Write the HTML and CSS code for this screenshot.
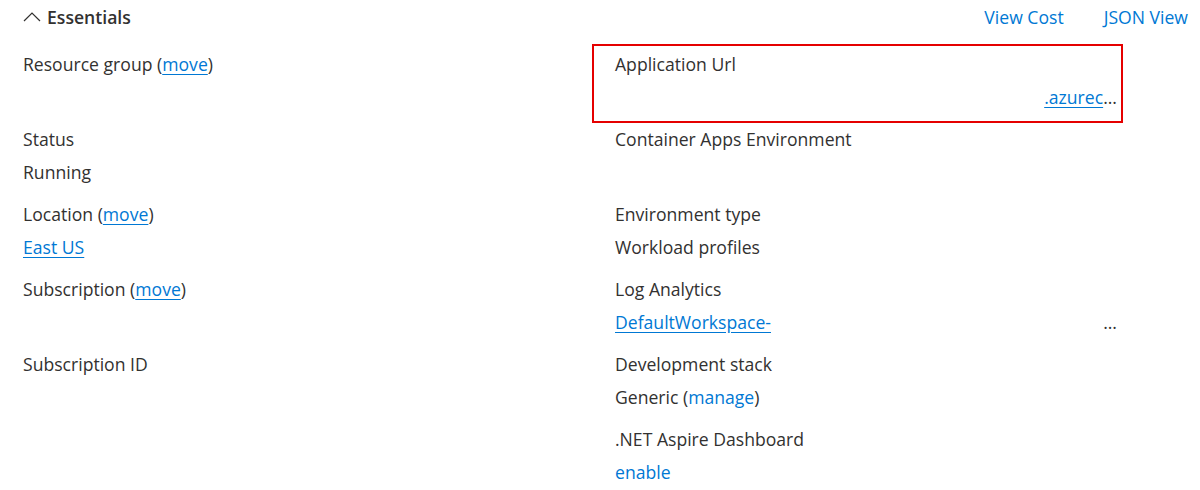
FILE: index.html
```html
<!DOCTYPE html>
<html>
<head>
<meta charset="utf-8">
<link rel="stylesheet" href="styles.css">
</head>
<body>
<div class="page">
  <div class="header">
    <div class="toggle">
      <svg class="chev" width="18" height="11" viewBox="0 0 18 11"><path d="M1 10 L9 2 L17 10" fill="none" stroke="#323130" stroke-width="1.2"/></svg>
      <span class="title">Essentials</span>
    </div>
    <div class="actions">
      <a class="plain">View Cost</a>
      <a class="plain">JSON View</a>
    </div>
  </div>
  <div class="grid">
    <div class="col left">
      <div class="item">
        <div class="label">Resource group (<a class="u">move</a>)</div>
        <div class="value"></div>
      </div>
      <div class="item">
        <div class="label">Status</div>
        <div class="value">Running</div>
      </div>
      <div class="item">
        <div class="label">Location (<a class="u">move</a>)</div>
        <div class="value"><a class="u">East US</a></div>
      </div>
      <div class="item">
        <div class="label">Subscription (<a class="u">move</a>)</div>
        <div class="value"></div>
      </div>
      <div class="item">
        <div class="label">Subscription ID</div>
        <div class="value"></div>
      </div>
    </div>
    <div class="col right">
      <div class="item boxed">
        <div class="label">Application Url</div>
        <div class="value end"><a class="u">.azurec</a>...</div>
      </div>
      <div class="item">
        <div class="label">Container Apps Environment</div>
        <div class="value"></div>
      </div>
      <div class="item">
        <div class="label">Environment type</div>
        <div class="value">Workload profiles</div>
      </div>
      <div class="item">
        <div class="label">Log Analytics</div>
        <div class="value split"><a class="u">DefaultWorkspace-</a><span>...</span></div>
      </div>
      <div class="item">
        <div class="label">Development stack</div>
        <div class="value">Generic (<a class="plain">manage</a>)</div>
      </div>
      <div class="item">
        <div class="label">.NET Aspire Dashboard</div>
        <div class="value"><a class="plain">enable</a></div>
      </div>
    </div>
  </div>
</div>
</body>
</html>
```

FILE: styles.css
```css
html, body {
  margin: 0;
  padding: 0;
  background: #ffffff;
}
body {
  font-family: "Open Sans", "Noto Sans", sans-serif;
  font-size: 17.6px;
  color: #323130;
}
.page {
  width: 1200px;
}
.header {
  display: flex;
  justify-content: space-between;
  align-items: center;
  height: 24px;
  padding: 5px 12px 0 23px;
  line-height: 24px;
}
.toggle {
  display: flex;
  align-items: center;
  gap: 6px;
}
.chev {
  display: block;
  margin-top: -2px;
}
.title {
  font-weight: 600;
}
.actions {
  display: flex;
  gap: 40px;
}
a {
  color: #0078d4;
  cursor: pointer;
}
a.plain {
  text-decoration: none;
}
a.u {
  text-decoration: underline;
  text-underline-offset: 3px;
}
.grid {
  display: grid;
  grid-template-columns: 592px 531px;
  margin-top: 17px;
}
.col {
  display: flex;
  flex-direction: column;
}
.item {
  height: 57px;
  padding-top: 6px;
  padding-bottom: 12px;
  border: 2px solid transparent;
  margin: -2px 0;
  box-sizing: content-box;
  line-height: 24px;
}
.left .item {
  padding-left: 21px;
}
.right .item {
  padding-left: 21px;
  padding-right: 4px;
}
.item.boxed {
  border-color: #e50000;
}
.label {
  height: 24px;
  margin-bottom: 9px;
  white-space: nowrap;
}
.value {
  height: 24px;
  white-space: nowrap;
}
.value.end {
  text-align: right;
}
.value.split {
  display: flex;
  justify-content: space-between;
}
```
